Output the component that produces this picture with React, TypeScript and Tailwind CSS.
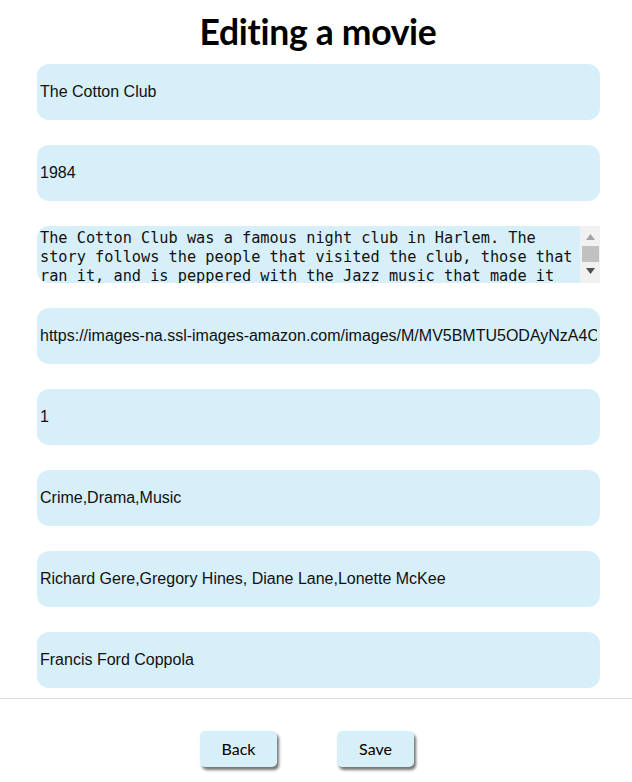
import { useState } from 'react';

const fields = [
    { name: 'title', value: 'The Cotton Club' },
    { name: 'year', value: '1984' },
    { name: 'plot', value: 'The Cotton Club was a famous night club in Harlem. The story follows the people that visited the club, those that ran it, and is peppered with the Jazz music that made it so famous.', multiline: true },
    { name: 'poster', value: 'https://images-na.ssl-images-amazon.com/images/M/MV5BMTU5ODAyNzA4OV5BMl5BanBnXkFtZTcwNzYwNTIzNA@@._V1_SX300.jpg' },
    { name: 'rating', value: '1' },
    { name: 'genres', value: 'Crime,Drama,Music' },
    { name: 'actors', value: 'Richard Gere,Gregory Hines, Diane Lane,Lonette McKee' },
    { name: 'director', value: 'Francis Ford Coppola' },
];

// headless browser hides native scrollbars, so draw one
const FakeScrollbar = () => (
    <div className="w-[20px] h-[57px] shrink-0 bg-[#f1f1f1] flex flex-col items-center">
        <svg width="9" height="6" viewBox="0 0 9 6" className="mt-[8px]">
            <path d="M4.5 0 L9 6 L0 6 Z" fill="#a3a3a3" />
        </svg>
        <div className="mt-[6px] w-[17px] h-[16px] bg-[#c1c1c1]" />
        <svg width="9" height="6" viewBox="0 0 9 6" className="mt-[6px]">
            <path d="M0 0 L9 0 L4.5 6 Z" fill="#505050" />
        </svg>
    </div>
);

const App = () => {
    const [movie, setMovie] = useState<Record<string, string>>(
        Object.fromEntries(fields.map((f) => [f.name, f.value]))
    );

    const handleChange = (name: string, value: string) => {
        setMovie({ ...movie, [name]: value });
    };

    return (
        <div className="h-[782px] flex flex-col bg-white overflow-hidden">
            <div className="flex-1 overflow-hidden flex flex-col items-center">
                <h1 className="mt-[11px] text-[35.5px] leading-[42px] font-bold text-black font-['Lato',sans-serif] tracking-[-0.3px] mr-[-4px]">Editing a movie</h1>
                <form className="mt-[11px] flex flex-col gap-[25px] w-[563px] ml-[5px]">
                    {fields.map((f) =>
                        f.multiline ? (
                            <div key={f.name} className="flex">
                                <textarea
                                    value={movie[f.name]}
                                    onChange={(e) => handleChange(f.name, e.target.value)}
                                    className="h-[57px] flex-1 resize-none bg-[#d7eff9] rounded-l-[12px] pl-[3px] pt-[3px] text-[15.25px] leading-[19px] text-[#111] font-['DejaVu_Sans_Mono',monospace] overflow-hidden outline-none"
                                />
                                <FakeScrollbar />
                            </div>
                        ) : (
                            <input
                                key={f.name}
                                value={movie[f.name]}
                                onChange={(e) => handleChange(f.name, e.target.value)}
                                className="h-[56px] w-full bg-[#d7eff9] rounded-[12px] px-[3px] text-[16px] text-[#111] font-['Liberation_Sans',Arial,sans-serif] outline-none"
                            />
                        )
                    )}
                </form>
            </div>
            <div className="h-[84px] shrink-0 border-t border-[#dddddd] flex justify-center gap-[60px] pt-[32px] pr-[18px]">
                <button className="w-[77px] h-[36px] bg-[#d7eff9] rounded-[5px] shadow-[2px_3px_3px_rgba(0,0,0,0.55)] text-[16px] text-black font-['Lato',sans-serif]">Back</button>
                <button className="w-[77px] h-[36px] bg-[#d7eff9] rounded-[5px] shadow-[2px_3px_3px_rgba(0,0,0,0.55)] text-[16px] text-black font-['Lato',sans-serif]">Save</button>
            </div>
        </div>
    );
};

export default App;
